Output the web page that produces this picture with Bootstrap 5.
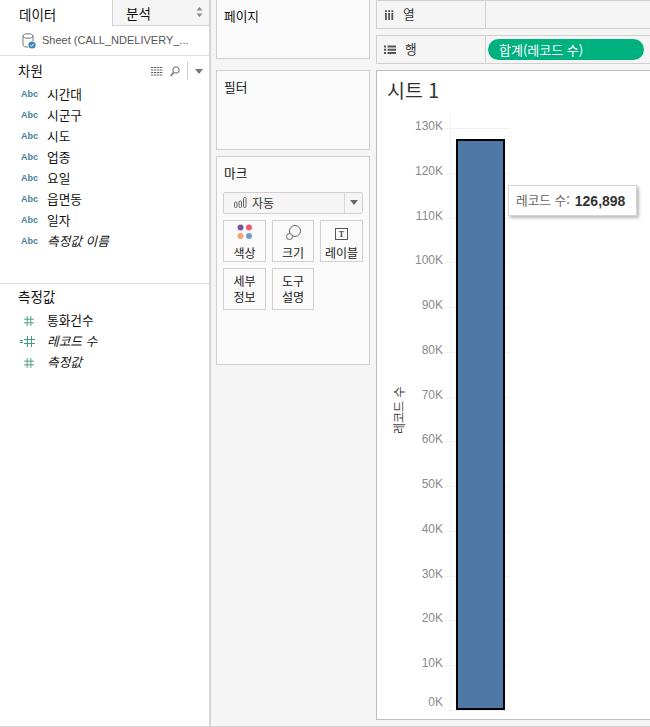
<!DOCTYPE html>
<html lang="ko">
<head>
<meta charset="utf-8">
<title>Sheet 1</title>
<link href="https://cdn.jsdelivr.net/npm/bootstrap@5.3.0/dist/css/bootstrap.min.css" rel="stylesheet">
<style>
html,body{margin:0;height:727px;overflow:hidden;background:#f5f5f5}
body{font-family:"Noto Sans CJK KR","Liberation Sans",sans-serif;font-size:12.7px;color:#111;line-height:1}
.app{width:650px;height:727px;border-bottom:1px solid #d4d4d4}
.side{width:211px;background:#fff;border-right:2px solid #d4d4d4;flex:none}
.tabs{height:26px}
.tab-a{width:112px;padding:8px 0 0 19px;font-size:13.5px}
.tab-b{flex:1;background:#f5f5f5;border:1px solid #d4d4d4;border-top:0;border-right:0;padding:7px 0 0 13px;font-size:13.5px}
.updown{margin-left:auto;margin-right:6px;margin-top:0}
.source{height:30px;border-bottom:1px solid #dedede;padding:0 0 0 22px;color:#555;font-family:"Liberation Sans",sans-serif;font-size:11px}
.source svg{margin-right:6px}
.sec-head{padding:2px 0 0 18px;font-size:13.5px;height:28px}
.sec-m{padding-top:0;height:26px}
.tools{margin-left:auto;padding-right:6px;gap:7px}
.vbar{width:1px;height:18px;background:#ccc}
.field{height:21px;padding-left:21px}
.abc{width:26px;font-family:"Liberation Sans",sans-serif;font-size:9px;font-weight:700;color:#4a7f9c;flex:none}
.hash{width:26px;flex:none}
.hash-s{padding-left:3px}
.hash-d{margin-left:-1px}
.it{font-style:italic}
.dim-list{height:200px;border-bottom:1px solid #dedede}
.mid{width:165px;padding:0 0 0 5px;flex:none}
.pane{background:#fafafa;border:1px solid #d0d0d0;width:154px;padding:10px 6px 11px 7px}
.pg{height:59px;border-top:0;margin-bottom:11px}
.fl{height:80px;margin-bottom:6px}
.mk{height:209px}
.mdrop{height:22px;background:#f5f5f5;border:1px solid #d0d0d0;border-radius:2px;margin-top:12px;margin-left:-1px;font-size:12px;color:#333}
.mdrop-l{flex:1;padding-left:10px;gap:5px}
.mdrop-r{width:18px;height:100%;border-left:1px solid #d8d8d8}
.mgrid{display:grid;grid-template-columns:43px 42px 43px;column-gap:6px;row-gap:6px;margin-top:6px;margin-left:-1px}
.mbtn{height:42px;background:#fafafa;border:1px solid #d0d0d0;font-size:12px;line-height:16px;text-align:center;color:#222}
.mbtn svg{display:block;margin-bottom:5px}
.main{flex:1;min-width:0}
.shelf{height:29px;background:#f5f5f5;border:1px solid #d0d0d0;border-right:0;margin-bottom:6px;color:#333}
.shelf-l{width:109px;border-right:1px solid #d0d0d0;height:100%;padding-left:7px;gap:9px;flex:none}
.pill{background:#00b180;color:#fff;width:156px;height:21px;border-radius:11px;margin-left:2px;padding-left:11px;font-size:13px}
.view{height:650px;background:#fff;border:1px solid #bdbdbd;border-right:0;margin-top:6px;position:relative;overflow:hidden}
.vtitle{font-size:19.5px;color:#333;padding:7px 0 0 10px;font-weight:400;margin:0}
.ylabel{position:absolute;left:15px;top:317px;width:13px;height:46px;writing-mode:vertical-rl;text-orientation:sideways;transform:rotate(180deg);font-size:12px;line-height:13px;color:#444;white-space:nowrap;text-align:center}
.ticks{position:absolute;left:68px;top:57px;width:65px;height:583px;display:flex;flex-direction:column;justify-content:space-between;font-family:"Liberation Sans",sans-serif}
.tick{height:1px;position:relative;background:#f0f0f0}
.tick span{position:absolute;right:67px;top:-9px;font-size:12px;color:#8a8a8a;line-height:14px}
.tick:last-child span{top:-15px}
.axisv{position:absolute;left:73px;top:42px;bottom:8px;width:1px;background:#f3f3f3}
.barm{position:absolute;left:79px;top:68px;width:49px;height:571px;background:#4e79a7;border:2px solid #000}
.tipbox{position:absolute;left:131px;top:114px;height:31px;width:129px;background:#fff;border:1px solid #d4d4d4;box-shadow:2px 2px 3px rgba(0,0,0,.28);padding-left:7px;font-size:12.7px;color:#666;white-space:nowrap}
.tipbox b{font-family:"Liberation Sans",sans-serif;font-size:14px;color:#333;margin-left:5px}
</style>
</head>
<body>
<div class="app d-flex">
  <aside class="side">
    <div class="tabs d-flex">
      <div class="tab-a">데이터</div>
      <div class="tab-b d-flex">분석
        <svg class="updown" width="7" height="10" viewBox="0 0 7 10"><path d="M3.500 0 6.500 3.500H.5zM3.500 10 .5 6.500h6z" fill="#888"/></svg>
      </div>
    </div>
    <div class="source d-flex align-items-center">
      <svg width="14" height="16" viewBox="0 0 14 16"><ellipse cx="6" cy="3" rx="5" ry="2.200" fill="none" stroke="#777"/><path d="M1 3v9c0 1.200 2 2.200 5 2.200M11 3v5" fill="none" stroke="#777"/><circle cx="10" cy="12" r="3.600" fill="#3d85b5"/><path d="M8.300 12l1.300 1.300 2.100-2.400" stroke="#fff" fill="none"/></svg>
      <span>Sheet (CALL_NDELIVERY_...</span>
    </div>
    <div class="sec-head d-flex align-items-center">차원
      <div class="tools d-flex align-items-center">
        <svg width="12" height="9" viewBox="0 0 12 9"><path d="M0 .5h12M0 3h12M0 5.500h12M0 8h12" stroke="#666" stroke-dasharray="2.400 .6"/></svg>
        <svg width="10" height="11" viewBox="0 0 10 11"><circle cx="6" cy="4" r="3.200" fill="none" stroke="#666"/><path d="M3.500 6.500 .8 10" stroke="#666" stroke-width="1.300"/></svg>
        <span class="vbar"></span>
        <svg width="8" height="5" viewBox="0 0 8 5"><path d="M0 0h8L4 5z" fill="#777"/></svg>
      </div>
    </div>
    <div class="dim-list">
      <div class="field d-flex align-items-center"><span class="abc">Abc</span>시간대</div>
      <div class="field d-flex align-items-center"><span class="abc">Abc</span>시군구</div>
      <div class="field d-flex align-items-center"><span class="abc">Abc</span>시도</div>
      <div class="field d-flex align-items-center"><span class="abc">Abc</span>업종</div>
      <div class="field d-flex align-items-center"><span class="abc">Abc</span>요일</div>
      <div class="field d-flex align-items-center"><span class="abc">Abc</span>읍면동</div>
      <div class="field d-flex align-items-center"><span class="abc">Abc</span>일자</div>
      <div class="field d-flex align-items-center"><span class="abc">Abc</span><span class="it">측정값 이름</span></div>
    </div>
    <div class="sec-head sec-m d-flex align-items-center">측정값</div>
    <div>
      <div class="field d-flex align-items-center"><span class="hash hash-s"><svg width="10" height="10" viewBox="0 0 11 11" class="d-block"><path d="M3.500 0v11M7.500 0v11M0 3.500h11M0 7.500h11" stroke="#3f9b78"/></svg></span>통화건수</div>
      <div class="field d-flex align-items-center"><span class="hash"><svg width="15" height="11" viewBox="0 0 15 11" class="d-block hash-d"><path d="M0 4.500h3M0 6.500h3M7.500 0v11M11.500 0v11M4 3.500h11M4 7.500h11" stroke="#3f9b78"/></svg></span><span class="it">레코드 수</span></div>
      <div class="field d-flex align-items-center"><span class="hash hash-s"><svg width="10" height="10" viewBox="0 0 11 11" class="d-block"><path d="M3.500 0v11M7.500 0v11M0 3.500h11M0 7.500h11" stroke="#3f9b78"/></svg></span><span class="it">측정값</span></div>
    </div>
  </aside>

  <section class="mid">
    <div class="pane pg">페이지</div>
    <div class="pane fl">필터</div>
    <div class="pane mk">마크
      <div class="mdrop d-flex align-items-center">
        <div class="mdrop-l d-flex align-items-center">
          <svg width="13" height="11" viewBox="0 0 13 11"><rect x=".5" y="5" width="2.500" height="5.500" rx="1" fill="none" stroke="#666"/><rect x="5" y="4" width="2.500" height="6.500" rx="1" fill="none" stroke="#666"/><rect x="9.500" y=".5" width="2.500" height="10" rx="1" fill="none" stroke="#666"/></svg>
          자동
        </div>
        <div class="mdrop-r d-flex align-items-center justify-content-center"><svg width="8" height="5" viewBox="0 0 8 5"><path d="M0 0h8L4 5z" fill="#666"/></svg></div>
      </div>
      <div class="mgrid">
        <div class="mbtn d-flex flex-column align-items-center justify-content-end">
          <svg width="16" height="16" viewBox="0 0 16 16"><circle cx="3.500" cy="3.500" r="3" fill="#76599a"/><circle cx="12" cy="3.500" r="3" fill="#ed5a70"/><circle cx="3.500" cy="12" r="3" fill="#f3a56f"/><circle cx="12" cy="12" r="3" fill="#6f9dcb"/></svg>색상</div>
        <div class="mbtn d-flex flex-column align-items-center justify-content-end">
          <svg width="15" height="15" viewBox="0 0 15 15"><circle cx="9" cy="6" r="5.500" fill="none" stroke="#666"/><circle cx="3.500" cy="11.500" r="3" fill="#fafafa" stroke="#666"/></svg>크기</div>
        <div class="mbtn d-flex flex-column align-items-center justify-content-end">
          <svg width="13" height="12" viewBox="0 0 13 12"><rect x=".5" y=".5" width="12" height="11" fill="none" stroke="#555"/><text x="6.500" y="9" font-size="8" font-weight="700" text-anchor="middle" font-family="Liberation Serif" fill="#444">T</text></svg>레이블</div>
        <div class="mbtn d-flex align-items-center justify-content-center">세부<br>정보</div>
        <div class="mbtn d-flex align-items-center justify-content-center">도구<br>설명</div>
      </div>
    </div>
  </section>

  <main class="main">
    <div class="shelf d-flex align-items-center">
      <div class="shelf-l d-flex align-items-center">
        <svg width="10" height="10" viewBox="0 0 10 10"><path d="M1 3h1.800v7H1zM4.200 3H6v7H4.200zM7.400 3h1.800v7H7.400zM1 .3h1.800V2H1zM4.200 .3H6V2H4.200zM7.400 .3h1.800V2H7.400z" fill="#555"/></svg>
        열
      </div>
    </div>
    <div class="shelf d-flex align-items-center mb-0">
      <div class="shelf-l d-flex align-items-center">
        <svg width="12" height="9" viewBox="0 0 12 9"><path d="M0 .5h2v2H0zM3.500 .5H12v2H3.500zM0 3.800h2v2H0zM3.500 3.800H12v2H3.500zM0 7h2v2H0zM3.500 7H12v2H3.500z" fill="#555"/></svg>
        행
      </div>
      <div class="pill d-flex align-items-center">합계(레코드 수)</div>
    </div>
    <div class="view">
      <h1 class="vtitle">시트 1</h1>
      <div class="ylabel">레코드 수</div>
      <div class="axisv"></div>
      <div class="ticks">
        <div class="tick"><span>130K</span></div>
        <div class="tick"><span>120K</span></div>
        <div class="tick"><span>110K</span></div>
        <div class="tick"><span>100K</span></div>
        <div class="tick"><span>90K</span></div>
        <div class="tick"><span>80K</span></div>
        <div class="tick"><span>70K</span></div>
        <div class="tick"><span>60K</span></div>
        <div class="tick"><span>50K</span></div>
        <div class="tick"><span>40K</span></div>
        <div class="tick"><span>30K</span></div>
        <div class="tick"><span>20K</span></div>
        <div class="tick"><span>10K</span></div>
        <div class="tick"><span>0K</span></div>
      </div>
      <div class="barm"></div>
      <div class="tipbox d-flex align-items-center">레코드 수: <b>126,898</b></div>
    </div>
  </main>
</div>
<script src="https://cdn.jsdelivr.net/npm/bootstrap@5.3.0/dist/js/bootstrap.bundle.min.js"></script>
</body>
</html>
